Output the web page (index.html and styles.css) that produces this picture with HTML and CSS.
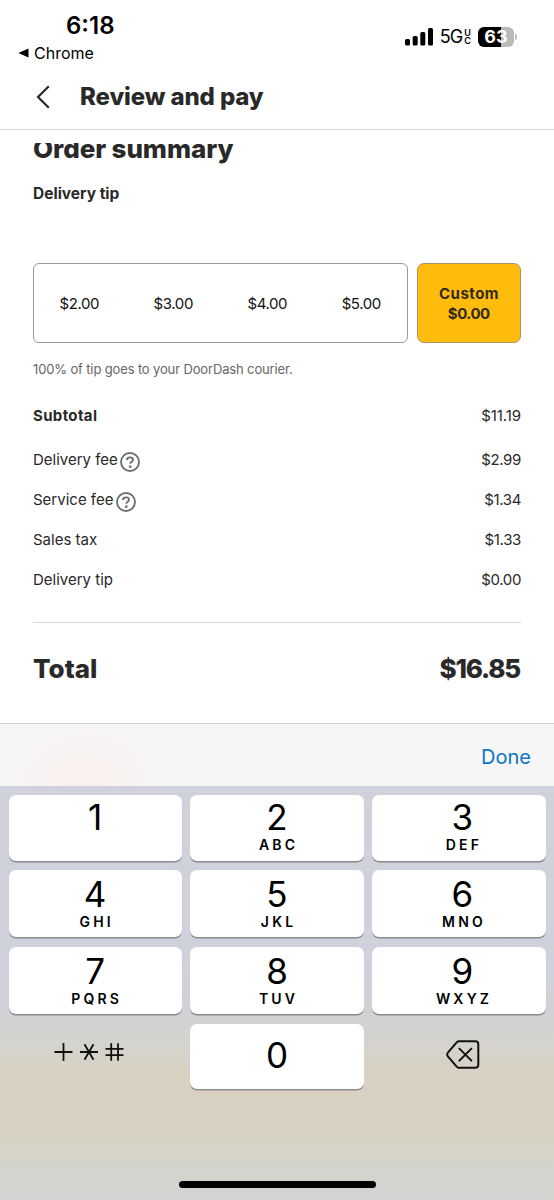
FILE: index.html
```
<!DOCTYPE html>
<html lang="en">
<head>
<meta charset="utf-8">
<title>Review and pay</title>
<link rel="stylesheet" href="styles.css">
</head>
<body>
<div class="screen">
  <div class="status">
    <div class="status-left">
      <div class="clock">6:18</div>
      <div class="back-app"><svg width="11" height="10" viewBox="0 0 11 10"><path d="M10.5 0.6v8.8L0.4 5z"/></svg><span>Chrome</span></div>
    </div>
    <div class="status-right">
      <svg class="signal" width="28" height="18" viewBox="0 0 28 18"><rect x="0" y="11" width="5" height="6.5" rx="1.5"/><rect x="7.7" y="8" width="5" height="9.5" rx="1.5"/><rect x="15.3" y="4" width="5" height="13.5" rx="1.5"/><rect x="23" y="0" width="5" height="17.5" rx="1.5"/></svg>
      <span class="net">5G</span>
      <span class="uc"><span>U</span><span>C</span></span>
      <span class="battery">63</span>
      <span class="nub"></span>
    </div>
  </div>
  <header class="header">
    <svg class="chevron" width="14" height="24" viewBox="0 0 14 24"><path d="M12.8 1.2 2 12l10.8 10.8" /></svg>
    <h1 class="title">Review and pay</h1>
  </header>
  <main class="content">
    <h2 class="heading">Order summary</h2>
    <div class="subheading">Delivery tip</div>
    <div class="tips">
      <div class="tip-options"><span>$2.00</span><span>$3.00</span><span>$4.00</span><span>$5.00</span></div>
      <div class="custom"><span class="custom-label">Custom</span><span class="custom-value">$0.00</span></div>
    </div>
    <p class="note">100% of tip goes to your DoorDash courier.</p>
    <div class="row subtotal"><span>Subtotal</span><span class="amount first">$11.19</span></div>
    <div class="row"><span class="fee">Delivery fee<svg class="help" width="20" height="20" viewBox="0 0 20 20"><circle cx="10" cy="10" r="9"/><path d="M7 7.9c0-1.6 1.3-2.5 3-2.5s3 .9 3 2.3c0 1.9-2.8 2-2.8 4.1"/><rect x="8.9" y="13.5" width="2.6" height="2.3"/></svg></span><span class="amount">$2.99</span></div>
    <div class="row"><span class="fee">Service fee<svg class="help" width="20" height="20" viewBox="0 0 20 20"><circle cx="10" cy="10" r="9"/><path d="M7 7.9c0-1.6 1.3-2.5 3-2.5s3 .9 3 2.3c0 1.9-2.8 2-2.8 4.1"/><rect x="8.9" y="13.5" width="2.6" height="2.3"/></svg></span><span class="amount">$1.34</span></div>
    <div class="row"><span class="fee">Sales tax</span><span class="amount">$1.33</span></div>
    <div class="row"><span class="fee">Delivery tip</span><span class="amount">$0.00</span></div>
    <div class="total"><span>Total</span><span class="total-amount">$16.85</span></div>
  </main>
  <div class="accessory"><span>Done</span></div>
  <div class="keyboard">
    <div class="keys">
      <div class="key"><b>1</b></div>
      <div class="key"><b>2</b><i>ABC</i></div>
      <div class="key right"><b>3</b><i>DEF</i></div>
      <div class="key"><b>4</b><i>GHI</i></div>
      <div class="key"><b>5</b><i>JKL</i></div>
      <div class="key right"><b>6</b><i>MNO</i></div>
      <div class="key"><b>7</b><i>PQRS</i></div>
      <div class="key"><b>8</b><i>TUV</i></div>
      <div class="key right"><b>9</b><i>WXYZ</i></div>
      <div class="plain"><svg class="symbols" width="70" height="20" viewBox="0 0 70 20"><path d="M0.5 10h18M9.5 1v18M26 10h18M30.5 2.2l9 15.6M39.5 2.2l-9 15.6M57.2 1.2v17.6M64 1.2v17.6M51.5 6.8h18M51.5 13.2h18"/></svg></div>
      <div class="key zero"><b>0</b></div>
      <div class="plain erase"><svg width="34" height="29" viewBox="0 0 34 29"><path d="M13 1.2h16.3a3 3 0 0 1 3 3v20.6a3 3 0 0 1-3 3H13a3 3 0 0 1-2.1-.9L1.9 16.3a2.5 2.5 0 0 1 0-3.6l9-10.6A3 3 0 0 1 13 1.2zM13.4 8.6l12 12M25.4 8.6l-12 12"/></svg></div>
    </div>
    <div class="home"></div>
  </div>
</div>
</body>
</html>
```
FILE: styles.css
```
* { box-sizing: border-box; }
body { margin: 0; background: #fff; color: #292929; font-family: Inter, "Liberation Sans", sans-serif; }
.screen { width: 554px; height: 1200px; overflow: hidden; display: flex; flex-direction: column; }
.status { height: 66px; flex: none; display: flex; justify-content: space-between; color: #000; }
.status-left { padding: 11px 0 0 18px; }
.clock { padding-left: 48px; font-size: 24px; line-height: 30px; font-weight: 600; letter-spacing: 0; }
.back-app { display: flex; align-items: center; gap: 5px; font-size: 16px; line-height: 22px; margin-top: 1px; letter-spacing: 0; }
.status-right { display: flex; align-items: center; height: 22px; margin: 26px 37px 0 0; }
.net { font-size: 18px; margin-left: 7px; letter-spacing: -0.9px; line-height: 22px; }
.uc { display: flex; flex-direction: column; font-size: 9px; line-height: 8px; font-weight: 600; margin: 0 0 0 2px; }
.uc span { height: 8px; }
.battery { width: 36px; height: 20px; border-radius: 6px; margin-left: 7px; background: linear-gradient(90deg, #000 63%, #b9b9b9 63%); color: #fff; font-weight: 700; font-size: 18px; line-height: 20px; text-align: center; }
.nub { width: 2px; height: 6px; margin-left: 1px; border-radius: 0 2px 2px 0; background: #bbb; }
.header { height: 64px; flex: none; border-bottom: 1px solid #d6d6d6; display: flex; align-items: center; padding: 0 0 2px 36px; }
.chevron { fill: none; stroke: #292929; stroke-width: 2.2; }
.title { margin: 0 0 0 30px; font-size: 24px; line-height: 30px; font-weight: 800; letter-spacing: -0.12px; }
.content { height: 580px; flex: none; margin-top: 13px; overflow: hidden; padding: 0 33px; }
.heading { margin: -11px 0 0; font-size: 26px; line-height: 34px; font-weight: 800; letter-spacing: -0.08px; }
.subheading { margin-top: 18px; font-size: 15.5px; line-height: 20px; font-weight: 700; letter-spacing: 0; }
.tips { display: flex; gap: 9px; height: 80px; margin-top: 59px; }
.tip-options { width: 374.5px; border: 1.5px solid #999; border-radius: 6px; display: grid; grid-template-columns: repeat(4, 94px); justify-content: center; align-items: center; text-align: center; font-size: 15px; letter-spacing: -0.4px; color: #111; }
.custom { flex: 1; border: 1.5px solid #aa9567; border-radius: 7px; background: #ffbc0d; font-size: 15px; line-height: 20px; font-weight: 700; color: #332a16; display: flex; flex-direction: column; align-items: center; justify-content: center; padding-top: 2px; }
.custom-label { letter-spacing: 0.5px; margin-right: -0.5px; }
.custom-value { letter-spacing: -0.5px; }
.note { margin: 16px 0 0; font-size: 13px; line-height: 20px; letter-spacing: -0.14px; color: #666; }
.row { display: flex; justify-content: space-between; align-items: center; height: 39.8px; font-size: 15px; }
.subtotal { height: 50px; margin-top: 11px; }
.subtotal span:first-child { font-weight: 700; letter-spacing: 0.35px; }
.fee { display: flex; align-items: center; }
.help { margin: 4px 0 0 2.5px; fill: none; stroke: #6f6f6f; stroke-width: 1.9; }
.help rect { fill: #6f6f6f; stroke: none; }
.amount { letter-spacing: -0.35px; }
.amount.first { letter-spacing: -0.1px; }
.total { margin-top: 23px; border-top: 1px solid #d6d6d6; height: 92px; display: flex; justify-content: space-between; align-items: center; font-size: 26px; font-weight: 800; letter-spacing: 0; }
.total-amount { letter-spacing: -1.2px; margin-right: 1px; }
.accessory { height: 63px; flex: none; border-top: 1px solid #d0d0d0; background: radial-gradient(ellipse 100px 85px at 85px 63px, #faf1ef, #f6f5f5 85%, #f6f6f7); display: flex; align-items: center; justify-content: flex-end; padding: 3px 23px 0 0; font-size: 20px; color: #0b74c4; }
.keyboard { height: 414px; flex: none; background: linear-gradient(#cfd2db 0, #cfd1dc 188px, #d2d2d5 230px, #d5d3cb 263px, #d9d1c2 290px, #d8d1c1 335px, #d6d4c6 362px, #d3d3d0 395px, #d3d3d1 414px); padding: 9px 8.5px 0; color: #000; }
.keys { display: grid; grid-template-columns: repeat(3, 1fr); grid-template-rows: 65.5px 67.3px 67.3px 65.5px; gap: 9.6px 8.8px; }
.key { background: #fff; border-radius: 7px; box-shadow: 0 1.5px 0 #898a8d; display: flex; flex-direction: column; align-items: center; padding-top: 5px; }
.key:nth-child(-n+3) { padding-top: 3px; }
.key.right { padding-left: 7px; }
.key b { font-size: 35px; line-height: 38px; font-weight: 380; }
.key i { margin-top: 1px; font-style: normal; font-size: 14px; line-height: 16px; font-weight: 600; letter-spacing: 3.2px; margin-right: -3.2px; }
.key.zero { padding: 0 0 3px; justify-content: center; }
.plain { display: flex; align-items: center; justify-content: center; padding: 0 12px 9px 0; }
.plain svg { fill: none; stroke: #111; stroke-width: 1.8; }
.plain.erase { padding: 0 0 4px 9px; }
.erase svg { stroke-width: 2; stroke-linejoin: round; stroke-linecap: round; }
.home { width: 197px; height: 7px; border-radius: 4px; background: #000; margin: 92px auto 0; }
```
